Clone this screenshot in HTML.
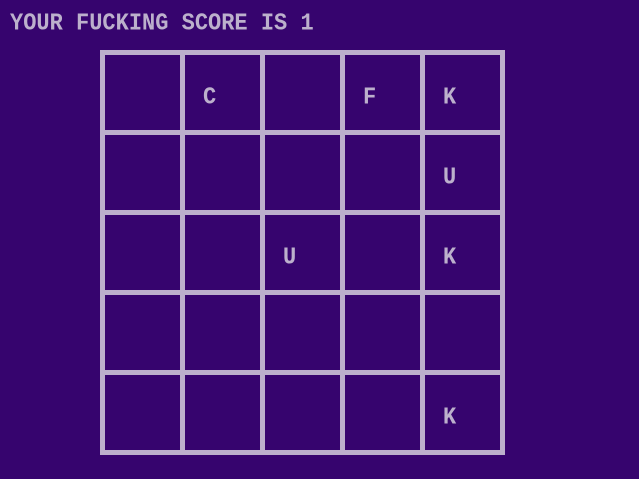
<!DOCTYPE html>
<html><head><style>
html,body{margin:0;padding:0;}
body{width:639px;height:479px;background:#36046e;position:relative;overflow:hidden;font-family:"Liberation Mono",monospace;font-weight:bold;color:#bcb0cc;}
.t{position:absolute;left:10px;top:11px;font-size:22px;line-height:26px;white-space:pre;transform:scaleY(1.1);transform-origin:0 50%;}
.v{position:absolute;top:50px;width:5px;height:405px;background:#bcb0cc;}
.h{position:absolute;left:100px;height:5px;width:405px;background:#bcb0cc;}
.c{position:absolute;font-size:22px;line-height:26px;transform:scaleY(1.1);}
</style></head><body>
<div class="t">YOUR FUCKING SCORE IS 1</div>
<div class="v" style="left:100px"></div><div class="v" style="left:180px"></div><div class="v" style="left:260px"></div><div class="v" style="left:340px"></div><div class="v" style="left:420px"></div><div class="v" style="left:500px"></div>
<div class="h" style="top:50px"></div><div class="h" style="top:130px"></div><div class="h" style="top:210px"></div><div class="h" style="top:290px"></div><div class="h" style="top:370px"></div><div class="h" style="top:450px"></div>
<div class="c" style="left:203px;top:85px">C</div>
<div class="c" style="left:363px;top:85px">F</div>
<div class="c" style="left:443px;top:85px">K</div>
<div class="c" style="left:443px;top:165px">U</div>
<div class="c" style="left:283px;top:245px">U</div>
<div class="c" style="left:443px;top:245px">K</div>
<div class="c" style="left:443px;top:405px">K</div>
</body></html>
